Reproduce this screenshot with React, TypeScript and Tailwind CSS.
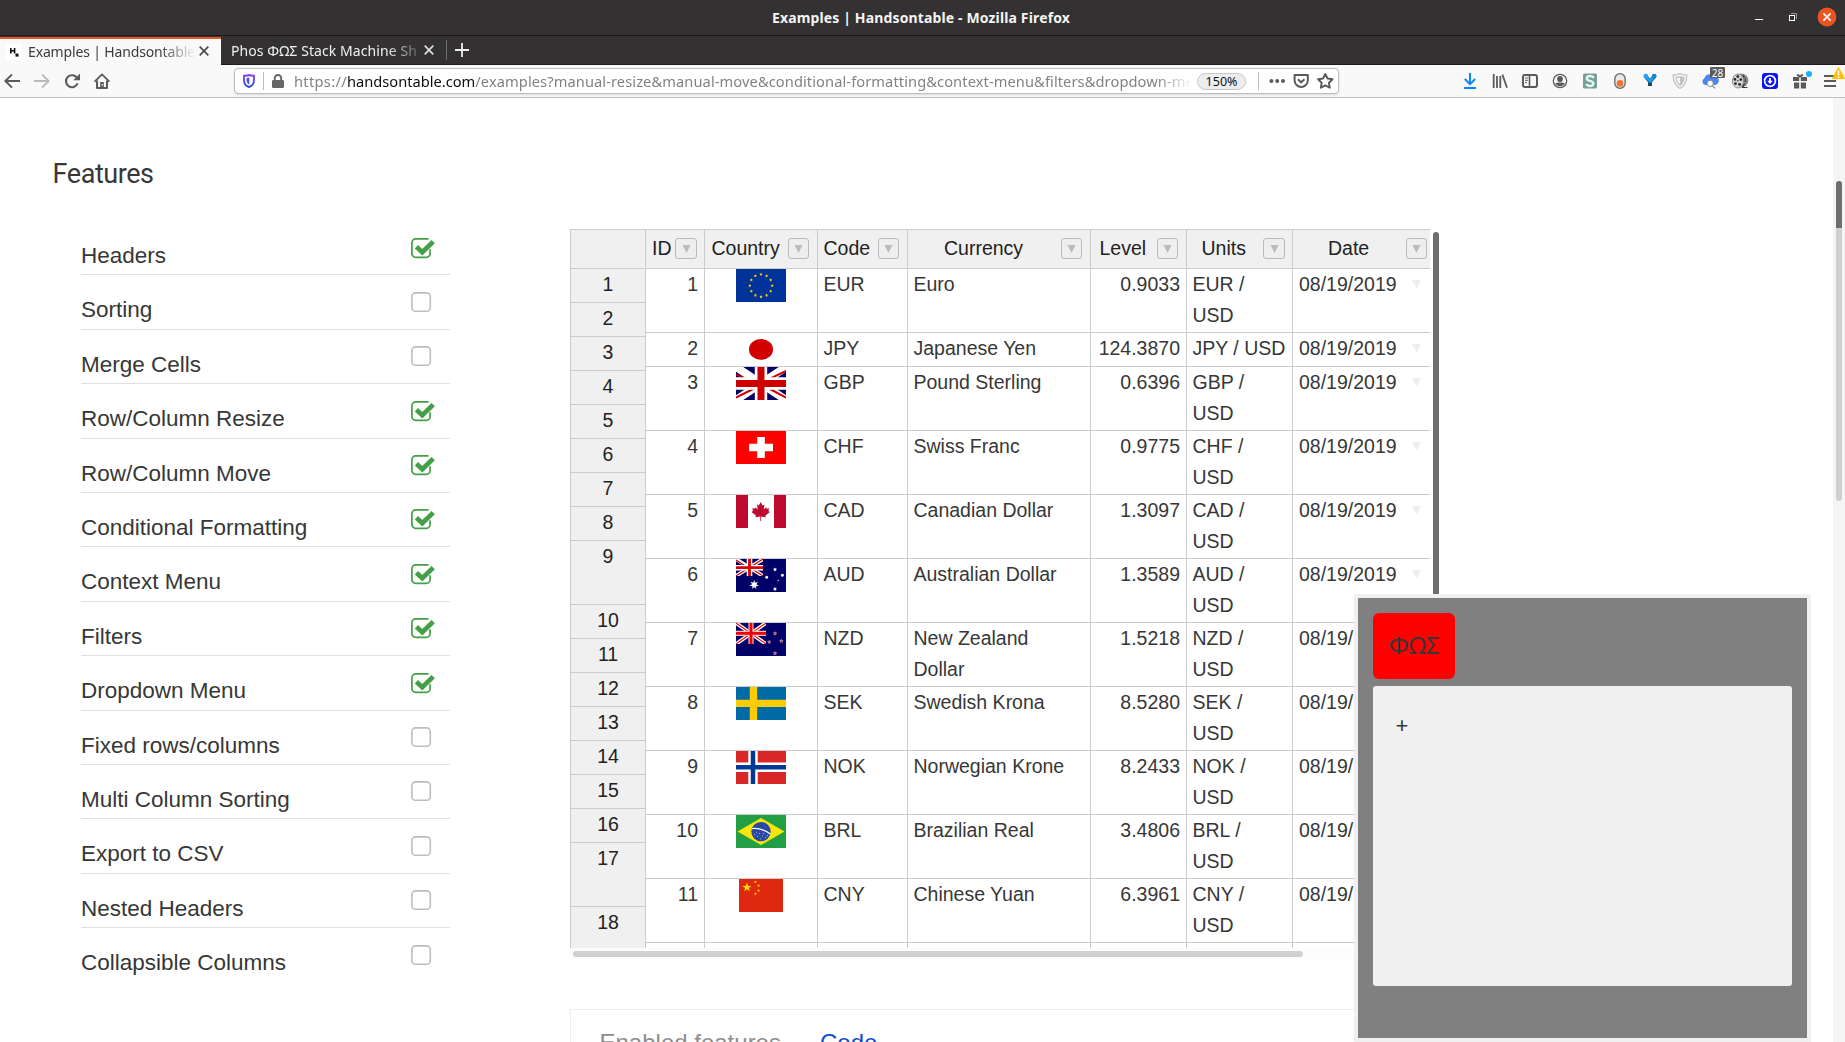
import { Fragment, type ReactNode } from "react";

const starPoints = (cx: number, cy: number, r: number, n = 5, inner = 0.4) =>
  Array.from({ length: n * 2 }, (_, i) => {
    const a = -Math.PI / 2 + (i * Math.PI) / n;
    const k = i % 2 ? r * inner : r;
    return `${(cx + k * Math.cos(a)).toFixed(2)},${(cy + k * Math.sin(a)).toFixed(2)}`;
  }).join(" ");

function Star({ x, y, r, n, inner, fill }: { x: number; y: number; r: number; n?: number; inner?: number; fill: string }) {
  return <polygon points={starPoints(x, y, r, n, inner)} fill={fill} />;
}

/* ---------- flags ---------- */

function FlagBox({ children, w = 50 }: { children: ReactNode; w?: number }) {
  return (
    <svg width={w} height={33} viewBox={`0 0 ${w} 33`} className="mx-auto block">
      {children}
    </svg>
  );
}

const euStars = Array.from({ length: 12 }, (_, i) => {
  const a = (i * Math.PI) / 6;
  return [25 + 11.2 * Math.sin(a), 16.6 - 11.2 * Math.cos(a)];
});

const flags: Record<string, ReactNode> = {
  EUR: (
    <FlagBox>
      <rect width="50" height="33" fill="#039" />
      {euStars.map(([x, y], i) => (
        <Star key={i} x={x} y={y} r={1.7} inner={0.5} fill="#fc0" />
      ))}
    </FlagBox>
  ),
  JPY: (
    <FlagBox>
      <ellipse cx="25" cy="16.4" rx="12" ry="10.4" fill="#d30000" />
    </FlagBox>
  ),
  GBP: (
    <FlagBox>
      <rect width="50" height="33" fill="#006" />
      <path d="M0 0L50 33M50 0L0 33" stroke="#fff" strokeWidth="8" />
      <path d="M0 7.4L12 13.2M0 30.6L18 21.5M50 4L32 12.6M50 30.6L34 22" stroke="#c00" strokeWidth="2" />
      <path d="M25 0V33M0 16.5H50" stroke="#fff" strokeWidth="12.4" />
      <path d="M25 0V33M0 16.5H50" stroke="#c00" strokeWidth="7" />
    </FlagBox>
  ),
  CHF: (
    <FlagBox>
      <rect width="50" height="33" fill="#f00" />
      <path d="M25 6V27M13 16.5H37" stroke="#fff" strokeWidth="7.6" />
    </FlagBox>
  ),
  CAD: (
    <FlagBox>
      <rect width="50" height="33" fill="#fff" />
      <rect width="12" height="33" fill="#bf0a30" />
      <rect x="38" width="12" height="33" fill="#bf0a30" />
      <path
        d="M24.7 7L26.6 10.4L28.4 9.5L27.7 14.6L30.2 12.3L30.7 13.7L33.2 13.3L32.4 16L34 16.9L29.4 20.6L29.9 22.2L25.1 21.6V26H24.3V21.6L19.5 22.2L20 20.6L15.4 16.9L17 16L16.2 13.3L18.7 13.7L19.2 12.3L21.7 14.6L21 9.5L22.8 10.4Z"
        fill="#bf0a30"
      />
    </FlagBox>
  ),
  AUD: (
    <FlagBox>
      <rect width="50" height="33" fill="#006" />
      <svg width="27" height="17" viewBox="0 0 27 17">
        <path d="M0 0L27 17M27 0L0 17" stroke="#fff" strokeWidth="3.6" />
        <path d="M0 1L11 8M0 17L11 10M27 0L16 7M27 17L16 10" stroke="#c00" strokeWidth="1.2" />
        <path d="M13.5 0V17M0 8.7H27" stroke="#fff" strokeWidth="5.6" />
        <path d="M13.5 0V17M0 8.7H27" stroke="#d00" strokeWidth="2.8" />
      </svg>
      <Star x={18.2} y={25.8} r={4.8} n={7} inner={0.45} fill="#fff" />
      <Star x={39} y={10.5} r={1.9} n={7} inner={0.6} fill="#fff" />
      <Star x={30.7} y={18.3} r={1.9} n={7} inner={0.6} fill="#fff" />
      <Star x={46.4} y={16.3} r={1.9} n={7} inner={0.6} fill="#fff" />
      <Star x={39} y={30} r={1.9} n={7} inner={0.6} fill="#fff" />
      <Star x={42.3} y={21.5} r={1.1} fill="#fff" />
    </FlagBox>
  ),
  NZD: (
    <FlagBox>
      <rect width="50" height="33" fill="#006" />
      <svg width="30" height="21" viewBox="0 0 30 21">
        <path d="M0 0L30 21M30 0L0 21" stroke="#fff" strokeWidth="3.8" />
        <path d="M0 0L30 21M30 0L0 21" stroke="#f00000" strokeWidth="1.1" />
        <path d="M15 0V21M0 10.4H30" stroke="#fbb" strokeWidth="5.2" />
        <path d="M15 0V21M0 10.4H30" stroke="#f00000" strokeWidth="2.8" />
      </svg>
      {[
        [39, 10.5],
        [33.2, 19],
        [45.3, 18],
        [39, 30.3],
      ].map(([x, y], i) => (
        <Fragment key={i}>
          <Star x={x} y={y} r={2.3} inner={0.5} fill="#c9a0c0" />
          <Star x={x} y={y} r={1.5} inner={0.5} fill="#e04050" />
        </Fragment>
      ))}
    </FlagBox>
  ),
  SEK: (
    <FlagBox>
      <rect width="50" height="33" fill="#006aa7" />
      <path d="M17.5 0V33M0 16.4H50" stroke="#fecc00" strokeWidth="7.4" />
    </FlagBox>
  ),
  NOK: (
    <FlagBox>
      <rect width="50" height="33" fill="#d72828" />
      <path d="M17 0V33M0 16.2H50" stroke="#fff" strokeWidth="9.4" />
      <path d="M17 0V33M0 16.2H50" stroke="#003897" strokeWidth="4.5" />
    </FlagBox>
  ),
  BRL: (
    <FlagBox>
      <rect width="50" height="33" fill="#229e45" />
      <path d="M25 3L48.5 16.5L25 30L1.5 16.5Z" fill="#f8e509" />
      <circle cx="25" cy="16.6" r="9.7" fill="#2b49a3" />
      <path d="M15.8 13.6Q26 12.6 34.4 19" stroke="#fff" strokeWidth="1.2" fill="none" />
      <path d="M18 19.5h1M21 21.5h1M23 18.5h1M26 21h1M29 22.5h1M24 24h1M27 18.5h1M31 20.5h1M20 17.3h1" stroke="#bcd" strokeWidth="0.8" />
    </FlagBox>
  ),
  CNY: (
    <FlagBox w={44}>
      <rect width="44" height="33" fill="#de2910" />
      <Star x={8} y={8.4} r={4.8} fill="#ffde00" />
      <Star x={16.4} y={3} r={1.6} fill="#ffde00" />
      <Star x={19.6} y={6.5} r={1.6} fill="#ffde00" />
      <Star x={19.6} y={11.6} r={1.6} fill="#ffde00" />
      <Star x={16.4} y={14.8} r={1.6} fill="#ffde00" />
    </FlagBox>
  ),
};

/* ---------- data ---------- */

const features: [string, boolean][] = [
  ["Headers", true],
  ["Sorting", false],
  ["Merge Cells", false],
  ["Row/Column Resize", true],
  ["Row/Column Move", true],
  ["Conditional Formatting", true],
  ["Context Menu", true],
  ["Filters", true],
  ["Dropdown Menu", true],
  ["Fixed rows/columns", false],
  ["Multi Column Sorting", false],
  ["Export to CSV", false],
  ["Nested Headers", false],
  ["Collapsible Columns", false],
];

const rows: [string, string, string][] = [
  ["EUR", "Euro", "0.9033"],
  ["JPY", "Japanese Yen", "124.3870"],
  ["GBP", "Pound Sterling", "0.6396"],
  ["CHF", "Swiss Franc", "0.9775"],
  ["CAD", "Canadian Dollar", "1.3097"],
  ["AUD", "Australian Dollar", "1.3589"],
  ["NZD", "New Zealand Dollar", "1.5218"],
  ["SEK", "Swedish Krona", "8.5280"],
  ["NOK", "Norwegian Krone", "8.2433"],
  ["BRL", "Brazilian Real", "3.4806"],
  ["CNY", "Chinese Yuan", "6.3961"],
];

const columns = [
  { name: "ID", pad: "pl-[6px]", btn: "mr-[7px] w-[22px]" },
  { name: "Country", pad: "pl-[6.5px]", btn: "mr-[8px] w-[21px]" },
  { name: "Code", pad: "pl-[5.5px]", btn: "mr-[8px] w-[21px]" },
  { name: "Currency", pad: "pl-[36px]", btn: "mr-[8px] w-[21px]" },
  { name: "Level", pad: "pl-[8.5px]", btn: "mr-[8px] w-[21px]" },
  { name: "Units", pad: "pl-[14.5px]", btn: "mr-[7px] w-[22px]" },
  { name: "Date", pad: "pl-[35px]", btn: "mr-[3px] w-[21px]" },
];

const gridCols = "grid grid-cols-[59px_113px_90px_183px_96px_106px_137px]";
const cell = "border-r border-b border-[#ccc] px-[6px]";
const textCell = "border-r border-b border-[#ccc] px-[5.5px]";

/* ---------- page pieces ---------- */

function CheckBox({ on }: { on: boolean }) {
  return on ? (
    <svg width="26" height="22" viewBox="0 0 26 22" fill="none" stroke="#43a047">
      <path d="M17.6 .9H4.6A3.7 3.7 0 0 0 .9 4.6V15.6A3.7 3.7 0 0 0 4.6 19.3H15.4A3.7 3.7 0 0 0 19.1 15.6V11.2" strokeWidth="1.7" />
      <path d="M5.4 8.8L11.3 14.2L22.2 3.6" strokeWidth="4.8" strokeLinejoin="miter" />
    </svg>
  ) : (
    <svg width="26" height="22" viewBox="0 0 26 22" fill="none" stroke="#bdbdbd">
      <rect x=".9" y=".9" width="18.4" height="18.4" rx="3.6" strokeWidth="1.6" />
    </svg>
  );
}

function Sheet() {
  return (
    <div className="flex h-[719px] w-[860px] shrink-0 overflow-hidden text-[19.5px] leading-[31px] text-[#373737]">
      <div className="flex w-[76px] shrink-0 flex-col border-l border-[#ccc] bg-[#f0f0f0] text-center text-[#222]">
        <div className="h-[40px] shrink-0 border-t border-r border-b border-[#ccc]" />
        {Array.from({ length: 18 }, (_, i) => (
          <div
            key={i}
            className={`shrink-0 border-r border-b border-[#ccc] ${i === 8 || i === 16 || i === 17 ? "h-[64px]" : "h-[34px]"}`}
          >
            {i + 1}
          </div>
        ))}
      </div>
      <div className="w-[784px] shrink-0">
        <div className={`${gridCols} h-[40px] border-t border-b border-[#ccc] bg-[#f0f0f0] text-[#222]`}>
          {columns.map((c, i) => (
            <div key={c.name} className={`flex justify-between border-[#ccc] ${i < 6 ? "border-r" : ""} ${c.pad}`}>
              <span className="leading-[37px]">{c.name}</span>
              <span className={`mt-[8px] flex h-[21px] shrink-0 items-center justify-center rounded-[3px] border border-[#bbb] bg-[#eee] ${c.btn}`}>
                <svg width="9" height="8" viewBox="0 0 9 8">
                  <path d="M.5 0H8.5L4.5 8Z" fill="#bbb" />
                </svg>
              </span>
            </div>
          ))}
        </div>
        {rows.map(([code, name, level], i) => (
          <div key={code} className={`${gridCols} ${code === "JPY" ? "h-[34px]" : "h-[64px]"}`}>
            <div className={`${cell} text-right`}>{i + 1}</div>
            <div className={cell}>{flags[code]}</div>
            <div className={textCell}>{code}</div>
            <div className={textCell}>{name}</div>
            <div className={`${cell} text-right`}>{level}</div>
            <div className={textCell}>
              {code === "JPY" ? (
                <span className="whitespace-nowrap">JPY / USD</span>
              ) : (
                <>
                  {code} /<br />
                  USD
                </>
              )}
            </div>
            <div className="flex justify-between border-b border-[#ccc] pr-[9px] pl-[6px]">
              08/19/2019
              <svg width="9" height="9" viewBox="0 0 9 9" className="mt-[11px]">
                <path d="M0 0H9L4.5 9Z" fill="#eee" />
              </svg>
            </div>
          </div>
        ))}
        <div className={`${gridCols} h-[64px]`}>
          {columns.map((c, i) => (
            <div key={c.name} className={`border-[#ccc] ${i < 6 ? "border-r" : ""}`} />
          ))}
        </div>
      </div>
    </div>
  );
}

function PhosPanel() {
  return (
    <div className="absolute top-[496px] left-[1354px] flex h-[448px] w-[457px] flex-col items-start border-4 border-[#f0f0f0] bg-[#808080] px-[15px] pt-[15px] font-['Noto_Sans',sans-serif] text-[#373737]">
      <div className="flex h-[66px] w-[82px] items-center justify-center rounded-[6px] bg-[#f00] pb-[2px] text-[24px]">ΦΩΣ</div>
      <div className="mt-[7px] h-[300px] w-[419px] rounded-[3px] bg-[#f0f0f0] pt-[25px] pl-[22.5px] text-[22.5px] leading-[28px]">+</div>
    </div>
  );
}

/* ---------- browser chrome ---------- */

function Cross({ color }: { color: string }) {
  return (
    <svg width="10" height="10" viewBox="0 0 10 10" stroke={color} strokeWidth="1.7">
      <path d="M.7 .7L9.3 9.3M9.3 .7L.7 9.3" />
    </svg>
  );
}

function Ico({ children }: { children: ReactNode }) {
  return (
    <svg width="16" height="16" viewBox="0 0 16 16" fill="none" className="shrink-0 overflow-visible">
      {children}
    </svg>
  );
}

function TitleBar() {
  return (
    <div className="relative flex h-[36px] items-center justify-end border-b border-[#1c1b1b] bg-[#333132]">
      <div className="absolute inset-0 flex items-center justify-center pr-[3px] pb-px text-[14px] font-bold tracking-[0.14px] text-[#f4f4f4]">
        Examples | Handsontable - Mozilla Firefox
      </div>
      <svg width="100" height="22" viewBox="0 0 100 22" fill="none" className="mb-[1px]">
        <path d="M10 13.5H18" stroke="#fff" />
        <rect x="44.5" y="9.5" width="5" height="5" stroke="#fff" />
        <path d="M46 7.5H51.5V13" stroke="#999" />
        <circle cx="82" cy="11" r="9.4" fill="#e95420" />
        <path d="M78.4 7.4L85.6 14.6M85.6 7.4L78.4 14.6" stroke="#fff" strokeWidth="1.6" />
      </svg>
    </div>
  );
}

function TabBar() {
  return (
    <div className="flex h-[29px] bg-[#333132] text-[14px]">
      <div className="mt-px flex w-[221px] items-center border-t-2 border-[#e95420] bg-[#f9f9f9] pb-[2px] pl-[6px] text-[#3b3b3b]">
        <svg width="16" height="16" viewBox="0 0 16 16" className="mt-[1px]">
          <rect width="16" height="16" fill="#fff" />
          <path d="M4.8 4V9.6M8.6 4V9.6M5 6.8H8.6" stroke="#111" strokeWidth="1.6" />
          <rect x="9.5" y="9.6" width="3" height="3" fill="#111" />
        </svg>
        <div className="ml-[6px] w-[166px] overflow-hidden tracking-[-0.15px] whitespace-nowrap [mask-image:linear-gradient(to_right,black_132px,transparent_168px)]">
          Examples | Handsontable
        </div>
        <div className="ml-[5px]">
          <Cross color="#4b4b4b" />
        </div>
      </div>
      <div className="flex flex-1 items-center border-b border-[#1c1b1b] pl-[10px] text-[#f0f0f0]">
        <div className="w-[186px] overflow-hidden tracking-[0.08px] whitespace-nowrap [mask-image:linear-gradient(to_right,black_155px,transparent_196px)]">
          Phos ΦΩΣ Stack Machine Sheet
        </div>
        <div className="ml-[7px]">
          <Cross color="#ddd" />
        </div>
        <div className="ml-[12px] h-[20px] w-px bg-[#707070]" />
        <svg width="14" height="14" viewBox="0 0 14 14" stroke="#eee" strokeWidth="1.8" className="ml-[8px]">
          <path d="M7 0V14M0 7H14" />
        </svg>
      </div>
    </div>
  );
}

function UrlBar() {
  return (
    <div className="flex h-[26px] w-[1105px] items-center rounded-[4px] border border-[#bdbdbd] bg-white shadow-sm">
      <svg width="12" height="14" viewBox="0 0 12 14" fill="none" className="ml-[8px] shrink-0">
        <defs>
          <linearGradient id="shield" x1="0" y1="0" x2="0" y2="1">
            <stop offset="0" stopColor="#8a4be8" />
            <stop offset="1" stopColor="#2a50d8" />
          </linearGradient>
        </defs>
        <path d="M6 1C4.5 1.6 2.8 1.8 1 1.8V6C1 9.5 2.8 12 6 13C9.2 12 11 9.5 11 6V1.8C9.2 1.8 7.5 1.6 6 1Z" stroke="url(#shield)" strokeWidth="1.9" />
        <path d="M6.3 3.6V10.6C4.3 9.6 3.6 8 3.6 6V4.1Z" fill="#4a4fdc" />
      </svg>
      <div className="ml-[8px] h-[18px] w-px shrink-0 bg-[#bbb]" />
      <svg width="12" height="14" viewBox="0 0 12 14" className="ml-[8px] shrink-0">
        <rect y="6" width="12" height="8" rx="1.2" fill="#666" />
        <path d="M2.8 7V4.2A3.2 3.2 0 0 1 9.2 4.2V7" fill="none" stroke="#666" strokeWidth="1.9" />
      </svg>
      <div className="ml-[10px] w-[898px] shrink-0 overflow-hidden text-[14.67px] whitespace-nowrap text-[#828282] [mask-image:linear-gradient(to_right,black_862px,transparent_898px)]">
        <span className="tracking-[0.3px]">https://</span>
        <span className="text-[#0c0c0d]">handsontable.com</span>
        <span className="tracking-[0.08px]">/examples?manual-resize&amp;manual-move&amp;conditional-formatting&amp;context-menu&amp;filters&amp;dropdown-menu</span>
      </div>
      <div className="ml-[5px] flex h-[17px] w-[49px] shrink-0 items-center justify-center rounded-full border border-[#c8c8c8] bg-[#ededed] text-[12.5px] leading-[15px] text-[#111]">
        150%
      </div>
      <div className="ml-[12px] h-[18px] w-px shrink-0 bg-[#bbb]" />
      <svg width="78" height="18" viewBox="0 0 78 18" fill="none" stroke="#5a5a5c" strokeWidth="2" className="shrink-0">
        <g fill="#5a5a5c" stroke="none">
          <circle cx="12.4" cy="9" r="2" />
          <circle cx="18.2" cy="9" r="2" />
          <circle cx="24" cy="9" r="2" />
        </g>
        <path d="M35.6 3H48.8V8.4A6.6 6.6 0 0 1 35.6 8.4Z" strokeLinejoin="round" />
        <path d="M38.9 7.2L42.2 10.3L45.5 7.2" />
        <polygon points={starPoints(66.3, 9.6, 7.6, 5, 0.5)} strokeWidth="1.9" strokeLinejoin="round" />
      </svg>
    </div>
  );
}

function Extensions() {
  return (
    <div className="flex items-center gap-[14px]">
      <Ico>
        <path d="M8 0V11M2.8 6L8 11.2L13.2 6M2 15H14" stroke="#0a84ff" strokeWidth="2" />
      </Ico>
      <Ico>
        <path d="M1.7 1V15M5 3V15M8.3 3V15M10.4 1.6L15 14.8" stroke="#5a5a5a" strokeWidth="1.8" />
      </Ico>
      <Ico>
        <rect x="1" y="2" width="14" height="12" rx="2" stroke="#5a5a5a" strokeWidth="2" />
        <path d="M7.5 2V14" stroke="#5a5a5a" strokeWidth="1.6" />
        <path d="M3 5H6M3 7.3H6M3 9.6H5" stroke="#5a5a5a" />
      </Ico>
      <Ico>
        <circle cx="8" cy="8" r="6.7" stroke="#5a5a5a" strokeWidth="1.3" />
        <circle cx="8" cy="6" r="2.9" fill="#5a5a5a" />
        <path d="M3.2 10.4C5 9.2 11 9.2 12.8 10.4C11.8 12.2 10 13.2 8 13.2S4.2 12.2 3.2 10.4Z" fill="#5a5a5a" />
      </Ico>
      <Ico>
        <rect x="1" y=".5" width="14" height="15" rx="1.5" fill="#7a9d96" />
        <path d="M11.6 4.9C11 3.6 9.6 3 8 3C6 3 4.8 4 4.8 5.4C4.8 8.6 11.4 7.2 11.4 10.6C11.4 12.2 10 13 8 13C6.2 13 4.9 12.3 4.3 10.9" stroke="#dff8f3" strokeWidth="2.4" />
      </Ico>
      <Ico>
        <rect x="2.8" y=".7" width="10.4" height="14.6" rx="5.2" fill="#e8e8e8" stroke="#666" strokeWidth="1.3" />
        <circle cx="8" cy="10.4" r="3.3" fill="#f0762f" />
      </Ico>
      <Ico>
        <path d="M3.6 3.4L8 8.4L12.4 3.4M8 8V13" stroke="#0f3f63" strokeWidth="3.8" />
        <path d="M3.8 3.6L8 8L12.2 3.6" stroke="#1d9cf0" strokeWidth="3" />
        <circle cx="3.8" cy="3.2" r="2.4" fill="#2aa4f4" />
        <circle cx="12.2" cy="3.2" r="2.4" fill="#1583d6" />
      </Ico>
      <Ico>
        <path d="M8 .7C6 1.7 3.5 2 1.2 2C1.2 8 3 12.8 8 15.3C13 12.8 14.8 8 14.8 2C12.5 2 10 1.7 8 .7Z" stroke="#c2c2c2" strokeWidth="1.3" />
        <path d="M8 3.6C6.8 4.1 5.4 4.4 4 4.4C4.2 8 5.2 10.6 8 12.4C10.8 10.6 11.8 8 12 4.4C10.6 4.4 9.2 4.1 8 3.6Z" stroke="#c2c2c2" strokeWidth="1.2" />
        <path d="M8 3.6C9.2 4.1 10.6 4.4 12 4.4C11.8 8 10.8 10.6 8 12.4Z" fill="#c2c2c2" />
      </Ico>
      <div className="relative">
        <Ico>
          <path d="M3.5 12A3.6 3.6 0 0 1 2.4 5.2A5 5 0 0 1 11 3A4.6 4.6 0 0 1 13.4 12Z" fill="#4a86f0" />
          <circle cx="8.2" cy="10.4" r="3.1" fill="#fff" stroke="#888" />
          <path d="M10.4 12.6L13 15.4" stroke="#888" strokeWidth="1.3" />
        </Ico>
        <div className="absolute -top-[6px] left-[8px] flex h-[11px] w-[15px] items-center justify-center rounded-[1px] bg-[#5b5b5b] text-[10px] leading-none text-white">
          28
        </div>
      </div>
      <Ico>
        <circle cx="9.4" cy="7.4" r="7" fill="#8c8c8c" />
        <ellipse cx="6" cy="8" rx="5.6" ry="7" fill="#d6d6d6" stroke="#777" strokeWidth=".8" />
        <g fill="#222">
          <circle cx="5.8" cy="3.6" r="1.4" />
          <circle cx="2.9" cy="6.4" r="1.3" />
          <circle cx="8.8" cy="6.6" r="1.3" />
          <circle cx="3.5" cy="10.6" r="1.3" />
          <circle cx="7.6" cy="11.4" r="1.4" />
          <circle cx="5.8" cy="7.8" r=".8" />
        </g>
        <path d="M11 2L12.4 5M13.4 5.5L13.2 9M12.6 10.5L10.6 14.5H15.4" stroke="#3a3a3a" strokeWidth="1.2" />
      </Ico>
      <Ico>
        <rect width="16" height="16" rx="3" fill="#0a14f5" />
        <circle cx="8" cy="8" r="5.4" stroke="#fff" strokeWidth="1.7" />
        <path d="M8 5V8.4" stroke="#fff" strokeWidth="1.8" />
        <path d="M5.3 7.8H10.7L8 10.9Z" fill="#fff" />
      </Ico>
      <Ico>
        <path d="M1 4H7.2V8H1ZM8.8 4H15V8H8.8ZM2 9.4H7.2V15.4H2ZM8.8 9.4H14V15.4H8.8Z" fill="#5a5a5a" />
        <path d="M5.2 1.6L8 3.6L10.8 1.6" stroke="#5a5a5a" strokeWidth="2" />
        <circle cx="17" cy="1" r="3" fill="#14b1fb" />
      </Ico>
      <Ico>
        <path d="M2 3H14M2 8H14M2 13H14" stroke="#5a5a5a" strokeWidth="2" />
        <path d="M16.5 -5.4L22.6 5.6H10.4Z" fill="#ffbf00" stroke="#ffbf00" strokeLinejoin="round" />
        <path d="M16.5 -2.6V2.2M16.5 3.4V5" stroke="#fff" strokeWidth="1.5" />
      </Ico>
    </div>
  );
}

function NavBar() {
  return (
    <div className="flex h-[33px] items-center overflow-hidden border-b border-[#bdbdbd] bg-[#f9f9f9] pl-[4px]">
      <div className="flex gap-[14px]">
        <Ico>
          <path d="M16 8H1.6M8 1.4L1.4 8L8 14.6" stroke="#5a5a5a" strokeWidth="2" />
        </Ico>
        <Ico>
          <path d="M0 8H14.4M8 1.4L14.6 8L8 14.6" stroke="#bababa" strokeWidth="2" />
        </Ico>
        <Ico>
          <path d="M13.2 5.2A6 6 0 1 0 13.6 10.4" stroke="#5a5a5a" strokeWidth="2.1" />
          <path d="M16 .6V7.2H9.4Z" fill="#5a5a5a" />
        </Ico>
        <Ico>
          <path d="M.6 8.6L8 1.4L15.4 8.6" stroke="#5a5a5a" strokeWidth="1.8" strokeLinejoin="round" />
          <path d="M3 7.6V15H13V7.6" stroke="#5a5a5a" strokeWidth="2" strokeLinejoin="round" />
          <path d="M6.2 15V9H9.8V15" fill="#5a5a5a" />
          <rect x="7.6" y="11" width="1.2" height="1.6" fill="#f9f9f9" />
        </Ico>
      </div>
      <div className="ml-[124px]">
        <UrlBar />
      </div>
      <div className="ml-[123px]">
        <Extensions />
      </div>
    </div>
  );
}

export default function App() {
  return (
    <div className="flex h-[1042px] w-[1845px] flex-col overflow-hidden bg-white font-['Liberation_Sans',Arial,sans-serif]">
      <header className="shrink-0 font-['Noto_Sans',sans-serif]">
        <TitleBar />
        <TabBar />
        <NavBar />
      </header>
      <main className="relative flex flex-1 overflow-hidden">
        <section className="w-[570px] shrink-0 pt-[60px]">
          <h1 className="pl-[52.6px] font-['Roboto',sans-serif] text-[27px] leading-[32px] tracking-[-0.45px] text-[#373737]">Features</h1>
          <ul className="mt-[31px] ml-[81px] w-[369px]">
            {features.map(([label, on]) => (
              <li key={label} className="flex h-[54.4px] justify-between border-b border-[#e0e0e0] pt-[16.5px] pr-[13px] last:border-b-0">
                <span className="pt-[5.6px] text-[22.5px] leading-[26px] text-[#373737]">{label}</span>
                <CheckBox on={on} />
              </li>
            ))}
          </ul>
        </section>
        <section className="flex flex-1 flex-col pt-[131px]">
          <div className="flex shrink-0">
            <Sheet />
            <div className="mt-[3px] ml-[3px] h-[560px] w-[6px] rounded-full bg-[#6e6e6e]" />
          </div>
          <div className="w-[860px] shrink-0 bg-[#fcfcfc] pt-[3px] pb-[2px] pl-[3px]">
            <div className="h-[6px] w-[730px] rounded-full bg-[#d0d0d0]" />
          </div>
          <div className="mt-[50px] flex h-[120px] w-[860px] shrink-0 gap-[39px] border-t border-l border-[#eee] pt-[19px] pl-[28.5px] text-[24px] leading-[28px]">
            <span className="text-[#8e8e8e]">Enabled features</span>
            <span className="text-[#104bcd]">Code</span>
          </div>
        </section>
        <div className="flex w-[12px] flex-col bg-[#f5f5f5] pt-[83px] pl-[3px]">
          <div className="h-[320px] w-[6px] overflow-hidden rounded-full bg-[#d0d0d0]">
            <div className="h-[47px] bg-[#6e6e6e]" />
          </div>
        </div>
        <PhosPanel />
      </main>
    </div>
  );
}
